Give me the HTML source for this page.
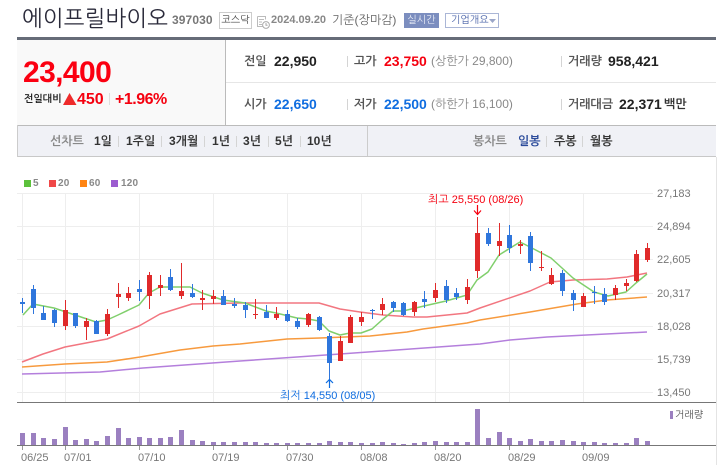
<!DOCTYPE html>
<html lang="ko"><head><meta charset="utf-8"><title>에이프릴바이오</title>
<style>
html,body{margin:0;padding:0;background:#fff}
#p{position:relative;width:720px;height:470px;overflow:hidden;background:#fff;font-family:"Liberation Sans","NanumGothic","Noto Sans CJK KR",sans-serif;font-size:12px;color:#222}
#p div,#p span.a{position:absolute;white-space:nowrap}
.t{line-height:16px;height:16px}
.k{font-weight:700;color:#555;font-size:12px}
.v{font-weight:700;font-size:14px;color:#222}
.r{color:#f5000f}.b{color:#0f6de0}
.g{color:#888;font-size:12px;font-weight:700}
.m{font-weight:700;color:#333;font-size:12px}
.s{width:1px;height:11px;background:#d4d4d4}
.y{font-size:11px;color:#777;left:657px}
.d{font-size:11px;color:#777;top:452px}
.l{font-size:10px;font-weight:700;color:#888;top:178px;letter-spacing:.2px}
</style></head><body><div id="p">

<div class="t" style="left:22px;top:6px;height:26px;line-height:26px;font-size:22px;letter-spacing:.2px;color:#2a2a3a">에이프릴바이오</div>
<div class="t" style="left:172px;top:12px;font-weight:700;font-size:12px;color:#777;letter-spacing:.1px">397030</div>
<div style="left:219px;top:12px;width:31px;height:15px;border:1px solid #ccc;text-align:center;font-size:10px;line-height:15px;color:#444">코스닥</div>
<svg style="position:absolute;left:257px;top:16px" width="13" height="13" viewBox="0 0 13 13"><path d="M.5 .5h8v3M.5 .5v10h5M2 3.5h5M2 6h3M2 8.5h3" fill="none" stroke="#bbb"/><circle cx="9" cy="9" r="3.4" fill="#fff" stroke="#aaa"/><path d="M9 7v2.2h1.600" fill="none" stroke="#aaa"/></svg>
<div class="t" style="left:271px;top:12px;font-size:11px;font-weight:700;color:#888">2024.09.20</div>
<div class="t" style="left:332px;top:12px;font-size:12px;color:#666">기준(장마감)</div>
<div style="left:404px;top:13px;width:35px;height:15px;background:#7c8ebf;color:#e8ecf6;text-align:center;font-size:10px;line-height:15px">실시간</div>
<div style="left:445px;top:13px;width:52px;height:13px;border:1px solid #aab6d6;color:#4a63a8;font-size:10px;line-height:13px;text-indent:5px">기업개요</div>
<svg style="position:absolute;left:489px;top:19px" width="7" height="4"><path d="M0 0h7L3.500 4z" fill="#9aa6c8"/></svg>

<div style="left:17px;top:37px;width:699px;height:3px;background:#666c78"></div>
<div style="left:17px;top:40px;width:208px;height:85px;background:#f9f9f9"></div>
<div style="left:225px;top:40px;width:1px;height:85px;background:#bbb"></div>
<div style="left:226px;top:82px;width:490px;height:1px;background:#e6e6e6"></div>
<div style="left:17px;top:125px;width:699px;height:1px;background:#bbb"></div>
<div style="left:17px;top:126px;width:699px;height:30px;background:#f0f1f6"></div>
<div style="left:17px;top:156px;width:699px;height:1px;background:#c8c8c8"></div>
<div style="left:17px;top:125px;width:1px;height:32px;background:#ccc"></div>
<div style="left:367px;top:126px;width:1px;height:30px;background:#ccc"></div>

<div style="left:23px;top:55px;line-height:36px;font-size:30px;font-weight:700;letter-spacing:-.6px;color:#fb0011">23,400</div>
<div class="t" style="left:24px;top:92px;font-size:10px;font-weight:700;color:#222">전일대비</div>
<svg style="position:absolute;left:63px;top:93px" width="14" height="12"><path d="M6.500 0L13.500 12H0z" fill="#ee2a2a"/></svg>
<div class="r" style="left:77px;top:90px;line-height:20px;font-size:16px;font-weight:700;color:#f5000f">450</div>
<div style="left:109px;top:93px;width:1px;height:12px;background:#ddd"></div>
<div class="r" style="left:115px;top:90px;line-height:20px;font-size:16px;font-weight:700;letter-spacing:-.5px">+1.96%</div>

<div class="k t" style="left:244px;top:53px">전일</div><div class="v t" style="left:274px;top:53px">22,950</div>
<div class="s" style="left:347px;top:56px"></div>
<div class="k t" style="left:354px;top:53px">고가</div><div class="v r t" style="left:384px;top:53px">23,750</div>
<div class="t" style="left:431px;top:53px;color:#888;font-size:12px">(상한가 29,800)</div>
<div class="s" style="left:561px;top:56px"></div>
<div class="k t" style="left:568px;top:53px">거래량</div><div class="v t" style="left:608px;top:53px">958,421</div>

<div class="k t" style="left:244px;top:96px">시가</div><div class="v b t" style="left:274px;top:96px">22,650</div>
<div class="s" style="left:347px;top:99px"></div>
<div class="k t" style="left:354px;top:96px">저가</div><div class="v b t" style="left:384px;top:96px">22,500</div>
<div class="t" style="left:431px;top:96px;color:#888;font-size:12px">(하한가 16,100)</div>
<div class="s" style="left:561px;top:99px"></div>
<div class="k t" style="left:568px;top:96px">거래대금</div><div class="v t" style="left:619px;top:96px">22,371</div><div class="t" style="left:664px;top:96px;font-weight:700;color:#333">백만</div>

<div class="g t" style="left:50px;top:133px">선차트</div>
<div class="m t" style="left:94px;top:133px">1일</div><div class="s" style="left:118px;top:136px"></div>
<div class="m t" style="left:126px;top:133px">1주일</div><div class="s" style="left:161px;top:136px"></div>
<div class="m t" style="left:169px;top:133px">3개월</div><div class="s" style="left:204px;top:136px"></div>
<div class="m t" style="left:212px;top:133px">1년</div><div class="s" style="left:236px;top:136px"></div>
<div class="m t" style="left:243px;top:133px">3년</div><div class="s" style="left:268px;top:136px"></div>
<div class="m t" style="left:275px;top:133px">5년</div><div class="s" style="left:300px;top:136px"></div>
<div class="m t" style="left:307px;top:133px">10년</div>
<div class="g t" style="left:473px;top:133px">봉차트</div>
<div class="m t" style="left:518px;top:133px;color:#2a4a9a">일봉</div><div class="s" style="left:546px;top:136px"></div>
<div class="m t" style="left:554px;top:133px">주봉</div><div class="s" style="left:582px;top:136px"></div>
<div class="m t" style="left:590px;top:133px">월봉</div>

<svg style="position:absolute;left:0;top:0" width="720" height="470" viewBox="0 0 720 470">
<rect x="24" y="180" width="7" height="7" fill="#5cc13c"/><rect x="49" y="180" width="7" height="7" fill="#f04848"/><rect x="80" y="180" width="7" height="7" fill="#ff8412"/><rect x="111" y="180" width="7" height="7" fill="#9c5cd0"/>
<path d="M17 193.500H653M17 226.500H653M17 259.500H653M17 293.500H653M17 326.500H653M17 359.500H653M17 392.500H653" stroke="#eee" fill="none"/>
<path d="M22.500 193V402M65.500 193V402M139.500 193V402M213.500 193V402M287.500 193V402M361.500 193V402M435.500 193V402M509.500 193V402M583.500 193V402" stroke="#eee" fill="none"/>
<path d="M716.500 157V465" stroke="#e4e4e4" fill="none"/>
<path d="M17 402.500H716M17 445.500H716" stroke="#777" fill="none"/>
<path d="M22.500 446v4M65.500 446v4M139.500 446v4M213.500 446v4M287.500 446v4M361.500 446v4M435.500 446v4M509.500 446v4M583.500 446v4" stroke="#999" fill="none"/>

<g fill="none" stroke-width="1.500" stroke-linejoin="round">
<polyline stroke="#b47fdc" points="22,374 100,372 143,368 240,361 340,354 480,344 510,340 547,337 647,332"/>
<polyline stroke="#f79a3e" points="22,367 65,364 107,362 140,357 180,350 213,346 240,344 287,339 320,338 370,336 407,332 423,329 467,323 480,320 530,312 577,304 607,300 647,297"/>
<polyline stroke="#f27680" points="22,362 43,354 65,347 107,339 139,326 160,314 192,304 240,303 310,303 319,303 340,309 360,312 383,315 413,317 427,317 467,313 480,308 530,291 550,282 573,280 607,279 627,277 647,273"/>
<polyline stroke="#80cf6c" points="23,315 33,304 54,308 75,315 96,322 107,320 118,315 139,305 149,293 160,287 181,287 190,287 202,293 223,300 245,303 266,311 276,313 297,318 308,319 319,321 329,331 340,335 350,333 361,333 372,329 382,320 393,311 403,311 424,306 446,301 467,295 477,280 488,272 499,255 520,242 530,247 551,258 573,278 594,292 608,296 626,292 636,283 647,274"/>
</g>

<path stroke="#2f76dc" fill="none" d="M22.500 298V313M33.500 285V314M43.500 306V320M54.500 309V327M75.500 313V328M96.500 320V334M139.500 280V301M170.500 269V291M192.500 284V298M223.500 290V305M234.500 298V308M245.500 302V318M266.500 305V318M287.500 310V322M297.500 318V329M319.500 316V331M329.500 333V380M372.500 309V319M393.500 301V312M403.500 302V316M424.500 291V308M446.500 280V303M456.500 288V300M488.500 228V246M509.500 225V253M530.500 232V271M562.500 270V296M573.500 290V311M594.500 286V304M604.500 288V305"/>
<path fill="#2f76dc" d="M20 302h5v2h-5zM31 289h5v19h-5zM41 313h5v7h-5zM52 310h5v13h-5zM73 313h5v13h-5zM94 321h5v13h-5zM137 289h5v3h-5zM168 277h5v13h-5zM190 293h5v4h-5zM221 296h5v9h-5zM232 304h5v2h-5zM243 305h5v5h-5zM264 312h5v6h-5zM285 314h5v7h-5zM295 321h5v6h-5zM317 317h5v13h-5zM327 336h5v27h-5zM370 310h5v1h-5zM391 302h5v6h-5zM401 303h5v12h-5zM422 299h5v3h-5zM444 286h5v14h-5zM454 293h5v4h-5zM486 233h5v11h-5zM507 235h5v13h-5zM528 236h5v27h-5zM560 273h5v18h-5zM571 293h5v7h-5zM592 292h5v1h-5zM602 294h5v8h-5z"/>
<path stroke="#e02a2a" fill="none" d="M65.500 300V330M86.500 318V340M107.500 309V336M118.500 283V308M128.500 287V301M149.500 272V309M160.500 275V296M181.500 263V299M202.500 290V310M213.500 290V304M255.500 299V319M276.500 307V320M308.500 313V327M340.500 336V361M350.500 315V343M361.500 312V326M382.500 298V315M414.500 301V316M435.500 283V302M467.500 279V304M477.500 217V278M499.500 223V256M520.500 240V254M541.500 251V271M551.500 268V285M583.500 293V307M615.500 285V300M626.500 279V291M636.500 250V282M647.500 243V262"/>
<path fill="#e02a2a" d="M63 310h5v16h-5zM84 321h5v6h-5zM105 314h5v20h-5zM116 294h5v3h-5zM126 293h5v5h-5zM147 275h5v21h-5zM158 285h5v3h-5zM179 291h5v5h-5zM200 298h5v2h-5zM211 296h5v3h-5zM253 314h5v1h-5zM274 314h5v4h-5zM306 314h5v11h-5zM338 341h5v20h-5zM348 317h5v26h-5zM359 317h5v5h-5zM380 304h5v6h-5zM412 302h5v10h-5zM433 290h5v8h-5zM465 287h5v13h-5zM475 233h5v38h-5zM497 241h5v5h-5zM518 244h5v2h-5zM539 267h5v1h-5zM549 275h5v9h-5zM581 296h5v11h-5zM613 288h5v7h-5zM624 283h5v3h-5zM634 254h5v27h-5zM645 248h5v12h-5z"/>

<path fill="#9b80c0" d="M20 433h5v12h-5zM31 433h5v12h-5zM41 438h5v7h-5zM52 439h5v6h-5zM63 427h5v18h-5zM73 440h5v5h-5zM84 439h5v6h-5zM94 441h5v4h-5zM105 436h5v9h-5zM116 428h5v17h-5zM126 438h5v7h-5zM137 437h5v8h-5zM147 438h5v7h-5zM158 438h5v7h-5zM168 437h5v8h-5zM179 430h5v15h-5zM190 440h5v5h-5zM200 441h5v4h-5zM211 442h5v3h-5zM221 442h5v3h-5zM232 442h5v3h-5zM243 442h5v3h-5zM253 442h5v3h-5zM264 443h5v2h-5zM274 443h5v2h-5zM285 443h5v2h-5zM295 443h5v2h-5zM306 443h5v2h-5zM317 443h5v2h-5zM327 441h5v4h-5zM338 442h5v3h-5zM348 442h5v3h-5zM359 443h5v2h-5zM370 443h5v2h-5zM380 442h5v3h-5zM391 443h5v2h-5zM401 444h5v1h-5zM412 443h5v2h-5zM422 442h5v3h-5zM433 441h5v4h-5zM444 442h5v3h-5zM454 442h5v3h-5zM465 442h5v3h-5zM475 409h5v36h-5zM486 438h5v7h-5zM497 432h5v13h-5zM507 438h5v7h-5zM518 441h5v4h-5zM528 439h5v6h-5zM539 441h5v4h-5zM549 441h5v4h-5zM560 440h5v5h-5zM571 441h5v4h-5zM581 442h5v3h-5zM592 442h5v3h-5zM602 443h5v2h-5zM613 443h5v2h-5zM624 443h5v2h-5zM634 438h5v7h-5zM645 441h5v4h-5zM670 411h3v8h-3z"/>

<path d="M477.500 205V214M474 210.500L477.500 214.500L481 210.500" fill="none" stroke="#f5000f" stroke-width="1.200"/>
<path d="M329.500 379V388M326 383L329.500 379.500L333 383" fill="none" stroke="#0f6de0" stroke-width="1.200"/>
</svg>

<div class="l" style="left:33px">5</div><div class="l" style="left:58px">20</div><div class="l" style="left:89px">60</div><div class="l" style="left:121px">120</div>

<div class="y" style="top:188px">27,183</div><div class="y" style="top:221px">24,894</div><div class="y" style="top:254px">22,605</div><div class="y" style="top:288px">20,317</div><div class="y" style="top:321px">18,028</div><div class="y" style="top:354px">15,739</div><div class="y" style="top:387px">13,450</div>
<div class="d" style="left:21px">06/25</div><div class="d" style="left:64px">07/01</div><div class="d" style="left:138px">07/10</div><div class="d" style="left:212px">07/19</div><div class="d" style="left:286px">07/30</div><div class="d" style="left:360px">08/08</div><div class="d" style="left:434px">08/20</div><div class="d" style="left:508px">08/29</div><div class="d" style="left:582px">09/09</div>

<div style="left:428px;top:193px;font-size:11px;line-height:14px;color:#f5000f">최고 25,550 (08/26)</div>
<div style="left:280px;top:389px;font-size:11px;line-height:14px;color:#0f6de0">최저 14,550 (08/05)</div>
<div style="left:675px;top:410px;font-size:10px;line-height:12px;color:#555">거래량</div>
</div></body></html>
